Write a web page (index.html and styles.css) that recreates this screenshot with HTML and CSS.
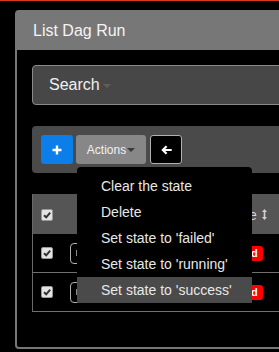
FILE: index.html
```html
<!DOCTYPE html>
<html>
<head>
<meta charset="utf-8">
<link rel="stylesheet" href="styles.css">
</head>
<body>
<div class="topline"></div>
<div class="page">
  <div class="panel">
    <div class="panel-heading">List Dag Run</div>
    <div class="panel-body">
      <div class="search">Search<span class="caret caret-dim"></span></div>
      <div class="toolbar">
        <button class="btn btn-add" aria-label="Add">
          <svg width="10" height="10" viewBox="0 0 10 10"><path d="M3.8 0.5h2.4v3.3h3.3v2.4H6.2v3.3H3.8V6.2H0.5V3.8h3.3z" fill="#fff"/></svg>
        </button>
        <div class="btn-group">
          <button class="btn btn-actions">Actions<span class="caret"></span></button>
          <ul class="menu">
            <li class="menu-item">Clear the state</li>
            <li class="menu-item">Delete</li>
            <li class="menu-item">Set state to 'failed'</li>
            <li class="menu-item">Set state to 'running'</li>
            <li class="menu-item active">Set state to 'success'</li>
          </ul>
        </div>
        <button class="btn btn-back" aria-label="Back">
          <svg width="11" height="10" viewBox="0 0 11 10"><path d="M0.3 5L4.8 0.5L6.4 2.1L4.3 4H10.7V6H4.3L6.4 7.9L4.8 9.5Z" fill="#fff"/></svg>
        </button>
      </div>
      <div class="table">
        <div class="tr thead">
          <div class="td c-check"><span class="cb"><svg width="10" height="10" viewBox="0 0 10 10"><path d="M2 5.2L4.2 7.3L8.2 2.6" stroke="#333" stroke-width="2" fill="none"/></svg></span></div>
          <div class="td c-act"></div>
          <div class="td c-state">State<svg class="sort" width="5" height="11" viewBox="0 0 5 11"><path d="M2.5 0L5 3H3.3V8H5L2.5 11L0 8H1.7V3H0Z" fill="#cfcfcf"/></svg></div>
        </div>
        <div class="tr">
          <div class="td c-check"><span class="cb"><svg width="10" height="10" viewBox="0 0 10 10"><path d="M2 5.2L4.2 7.3L8.2 2.6" stroke="#333" stroke-width="2" fill="none"/></svg></span></div>
          <div class="td c-act"><span class="rowbtn"><span class="rowicon"></span></span></div>
          <div class="td c-state"><span class="label">failed</span></div>
        </div>
        <div class="tr">
          <div class="td c-check"><span class="cb"><svg width="10" height="10" viewBox="0 0 10 10"><path d="M2 5.2L4.2 7.3L8.2 2.6" stroke="#333" stroke-width="2" fill="none"/></svg></span></div>
          <div class="td c-act"><span class="rowbtn"><span class="rowicon"></span></span></div>
          <div class="td c-state"><span class="label">failed</span></div>
        </div>
      </div>
    </div>
  </div>
</div>
</body>
</html>
```

FILE: styles.css
```css
html, body {
  margin: 0;
  padding: 0;
  background: #000;
  overflow: hidden;
  font-family: "Liberation Sans", Arial, sans-serif;
  color: #eee;
}

.topline {
  height: 1px;
  background: #e0371f;
}

.page {
  padding-top: 9px;
}

.panel {
  margin-left: 15px;
  width: 340px;
  border: 2px solid #777;
  border-radius: 4px;
  background: #000;
}

.panel-heading {
  background: #777;
  height: 38px;
  line-height: 38px;
  padding: 0 16px;
  font-size: 16px;
  color: #f4f4f4;
}

.panel-body {
  padding: 15px 0 35px 15px;
}

.search {
  box-sizing: border-box;
  height: 40px;
  line-height: 38px;
  border: 1px solid #8a8a8a;
  border-radius: 4px;
  background: #474747;
  padding-left: 16px;
  font-size: 16px;
  color: #f0f0f0;
}

.caret {
  display: inline-block;
  width: 0;
  height: 0;
  border-top: 4px solid #3a3a3a;
  border-left: 4px solid transparent;
  border-right: 4px solid transparent;
  vertical-align: middle;
  margin-left: 1px;
}

.caret-dim {
  border-top-color: #5e5e5e;
  margin-left: 3px;
}

.toolbar {
  margin-top: 21px;
  box-sizing: border-box;
  height: 47px;
  padding: 9px;
  background: #4a4a4a;
  border-radius: 4px;
  display: flex;
  align-items: flex-start;
}

.btn {
  box-sizing: border-box;
  height: 29px;
  border: 0;
  border-radius: 3px;
  padding: 0;
  margin: 0;
  display: flex;
  align-items: center;
  justify-content: center;
  font-family: inherit;
}

.btn-add {
  width: 32px;
  background: #0b7ee9;
}

.btn-group {
  position: relative;
  margin-left: 3px;
}

.btn-actions {
  width: 70px;
  background: #878787;
  color: #f0f0f0;
  font-size: 12px;
}

.btn-back {
  width: 32px;
  margin-left: 4px;
  background: #000;
  border: 1px solid #b0b0b0;
}

.menu {
  position: absolute;
  left: 1px;
  top: 32px;
  width: 175px;
  margin: 0;
  padding: 6px 0;
  list-style: none;
  background: #000;
  border-radius: 4px;
  z-index: 5;
}

.menu-item {
  height: 26px;
  line-height: 26px;
  padding: 0 24px;
  font-size: 14px;
  color: #e8e8e8;
  white-space: nowrap;
}

.menu-item.active {
  background: #4a4a4a;
}

.table {
  margin-top: 21px;
  border-left: 1px solid #6a6a6a;
}

.tr {
  display: flex;
  align-items: center;
  height: 39px;
  box-sizing: border-box;
  border-bottom: 1px solid #707070;
}

.tr.thead {
  height: 40px;
  background: #555;
  border-bottom: 0;
  padding-top: 1px;
}

.td {
  display: flex;
  align-items: center;
}

.c-check {
  width: 29px;
  padding-left: 8px;
  box-sizing: border-box;
}

.c-act {
  width: 154px;
  padding-left: 8px;
  box-sizing: border-box;
}

.c-state {
  padding-left: 8px;
  font-size: 14px;
  color: #d4d4d4;
}

.sort {
  margin-left: 5px;
}

.cb {
  box-sizing: border-box;
  width: 12px;
  height: 12px;
  background: #e4e4e4;
  border: 1px solid #999;
  border-radius: 2px;
  display: flex;
  align-items: center;
  justify-content: center;
}

.rowbtn {
  box-sizing: border-box;
  width: 26px;
  height: 21px;
  border: 1px solid #b0b0b0;
  border-radius: 4px;
  display: flex;
  align-items: center;
  padding-left: 5px;
}

.rowicon {
  width: 2px;
  height: 6px;
  background: #8a8a8a;
}

.label {
  background: #f00;
  color: #fff;
  font-size: 11px;
  font-weight: bold;
  padding: 1px 5px 2px;
  border-radius: 3px;
  line-height: 12px;
}
```
